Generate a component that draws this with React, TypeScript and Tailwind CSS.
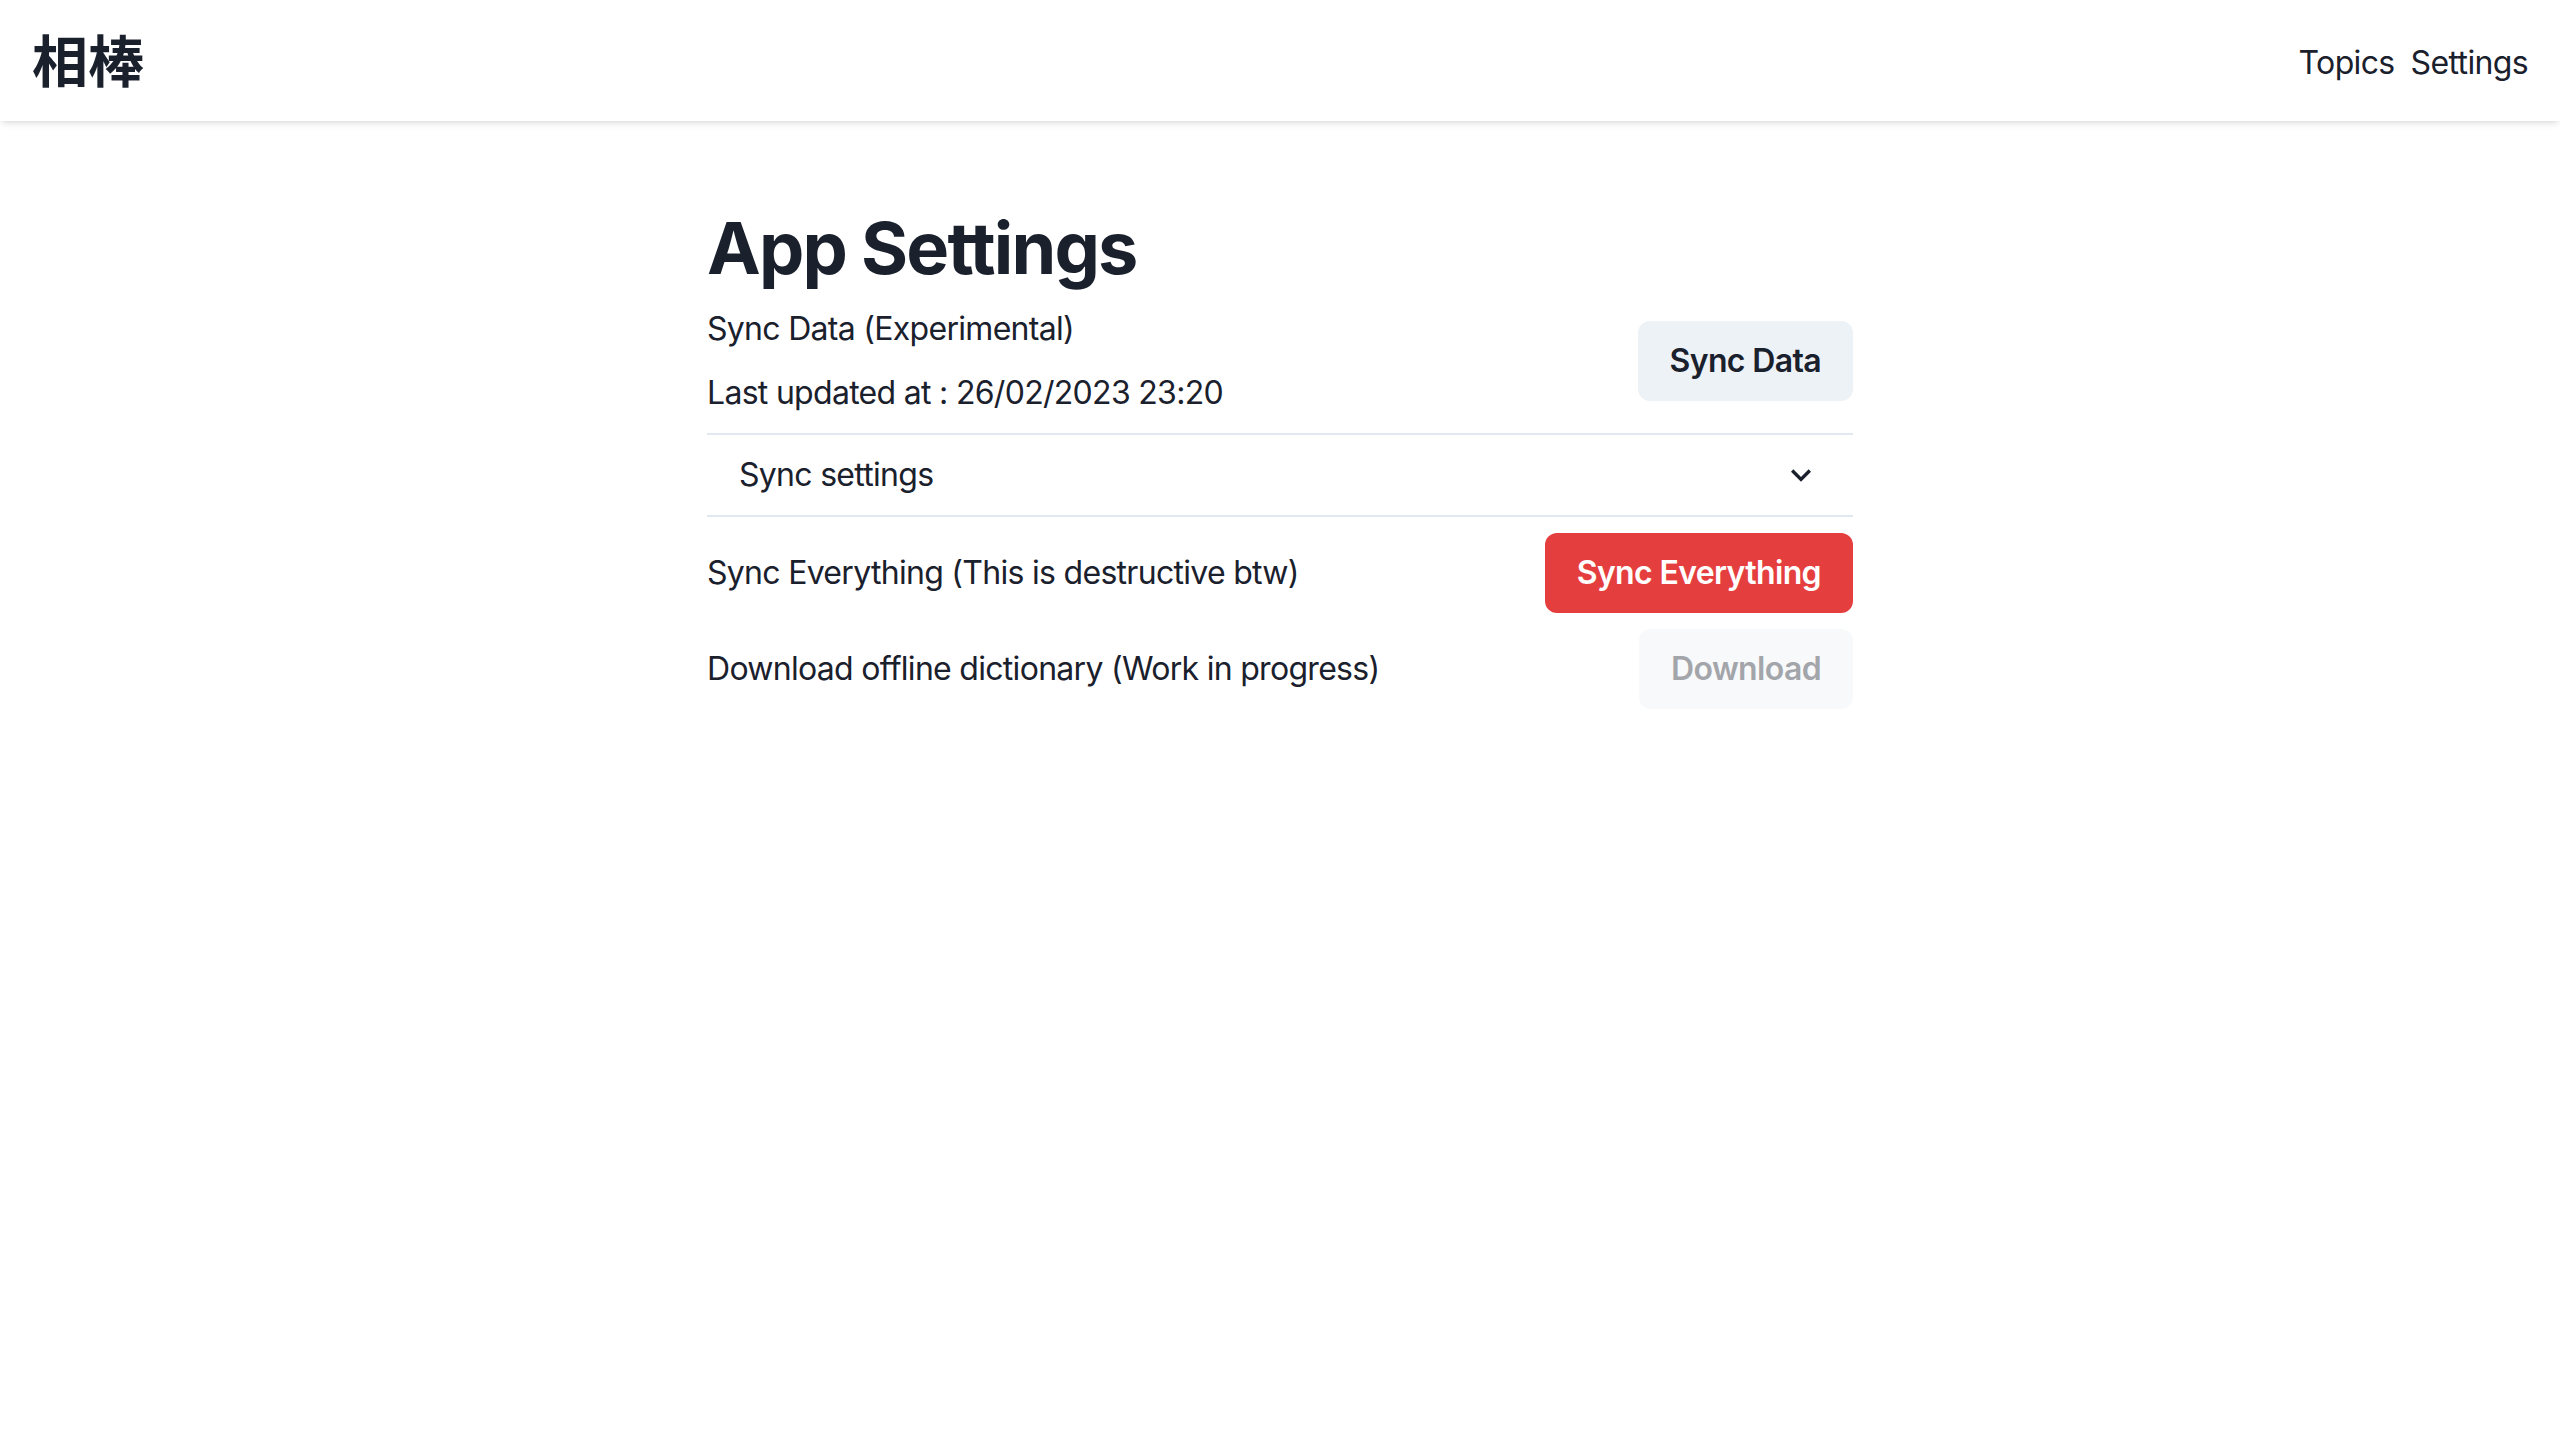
import React from 'react'

const font = { fontFamily: 'Inter, "Noto Sans CJK JP", sans-serif' }

function ChevronDown() {
  return (
    <svg viewBox="0 0 24 24" className="w-10 h-10" fill="currentColor">
      <path d="M16.59 8.59L12 13.17 7.41 8.59 6 10l6 6 6-6z" />
    </svg>
  )
}

export default function App() {
  return (
    <div className="min-h-screen bg-white text-[#1A202C]" style={font}>
      {/* Top bar */}
      <header className="h-[121px] flex items-center justify-between px-8 bg-white shadow-[0_4px_8px_-2px_rgba(0,0,0,0.12),0_2px_4px_-2px_rgba(0,0,0,0.08)]">
        <div className="text-[56px] leading-none font-bold mb-[6px]" style={{ fontFamily: '"Noto Sans CJK JP", Inter, sans-serif' }}>
          相棒
        </div>
        <nav className="flex items-center gap-4 pt-[5px] text-[32px] leading-[48px] tracking-[-0.02em]">
          <a>Topics</a>
          <a>Settings</a>
        </nav>
      </header>

      <main className="w-[1146px] mx-auto pt-[84px] text-[32px] leading-[48px] tracking-[-0.022em]">
        <h1 className="text-[72px] leading-[86px] font-bold mb-[14px] tracking-[-0.026em]">App Settings</h1>

        {/* Sync data */}
        <div className="flex items-center justify-between">
          <div className="flex flex-col gap-4">
            <p>Sync Data (Experimental)</p>
            <p>Last updated at : 26/02/2023 23:20</p>
          </div>
          <button className="h-[80px] px-8 rounded-[12px] bg-[#EDF2F7] font-semibold tracking-[-0.02em]">
            Sync Data
          </button>
        </div>

        {/* Accordion */}
        <div className="mt-4 border-t-2 border-b-2 border-[#E2E8F0]">
          <button className="w-full flex items-center justify-between px-8 py-4 text-left">
            <span>Sync settings</span>
            <ChevronDown />
          </button>
        </div>

        <div className="mt-4 flex items-center justify-between">
          <p>Sync Everything (This is destructive btw)</p>
          <button className="h-[80px] px-8 rounded-[12px] bg-[#E53E3E] text-white font-semibold tracking-[-0.02em]">
            Sync Everything
          </button>
        </div>

        <div className="mt-4 flex items-center justify-between">
          <p>Download offline dictionary (Work in progress)</p>
          <button
            disabled
            className="h-[80px] px-8 rounded-[12px] bg-[#EDF2F7] font-semibold opacity-40 cursor-not-allowed tracking-[-0.02em]"
          >
            Download
          </button>
        </div>
      </main>
    </div>
  )
}
